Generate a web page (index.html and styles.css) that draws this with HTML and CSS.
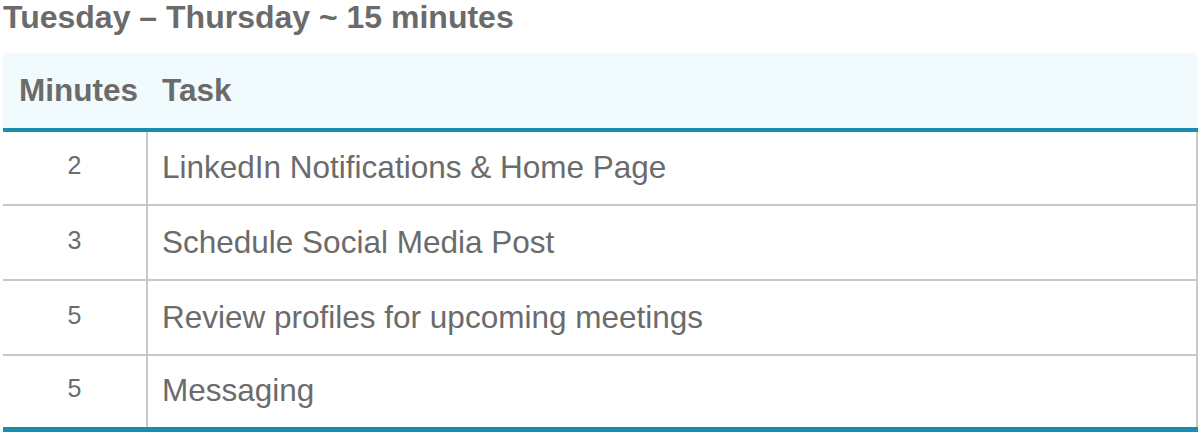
FILE: index.html
```html
<!DOCTYPE html>
<html>
<head>
<meta charset="utf-8">
<link rel="stylesheet" href="styles.css">
</head>
<body>
<h2 class="title">Tuesday – Thursday ~ 15 minutes</h2>
<table class="plan">
  <thead>
    <tr><th class="col-min">Minutes</th><th class="col-task">Task</th></tr>
  </thead>
  <tbody>
    <tr><td class="col-min">2</td><td class="col-task">LinkedIn Notifications &amp; Home Page</td></tr>
    <tr><td class="col-min">3</td><td class="col-task">Schedule Social Media Post</td></tr>
    <tr><td class="col-min">5</td><td class="col-task">Review profiles for upcoming meetings</td></tr>
    <tr><td class="col-min">5</td><td class="col-task">Messaging</td></tr>
  </tbody>
</table>
</body>
</html>
```
FILE: styles.css
```css
html, body {
  margin: 0;
  padding: 0;
  background: #ffffff;
}
body {
  font-family: "Liberation Sans", Arial, sans-serif;
  color: #6b6b6b;
  padding-left: 3px;
}
.title {
  margin: 0;
  font-size: 32px;
  font-weight: bold;
  line-height: 34px;
  height: 53px;
}
.plan {
  width: 1195px;
  border-collapse: collapse;
  border-bottom: 5px solid #1a8cad;
}
.plan th {
  background: #f1fafc;
  font-size: 31.5px;
  font-weight: bold;
  text-align: left;
  height: 75px;
  padding: 0;
  border-bottom: 4px solid #1a8cad;
  vertical-align: middle;
}
.plan th.col-min {
  padding-left: 16px;
  width: 128px;
}
.plan th.col-task {
  padding-left: 15px;
}
.plan td {
  font-size: 31.5px;
  line-height: 36px;
  height: 75px;
  padding: 0 0 2px 0;
  box-sizing: border-box;
  border-bottom: 2px solid #c8c8c8;
  vertical-align: middle;
}
.plan tbody tr:last-child td {
  border-bottom: none;
  height: 74px;
}
.plan td.col-min {
  text-align: center;
  font-size: 25px;
  width: 144px;
  padding-bottom: 6px;
  border-right: 2px solid #c8c8c8;
}
.plan td.col-task {
  padding-left: 14px;
  border-right: 2px solid #c8c8c8;
}
```
